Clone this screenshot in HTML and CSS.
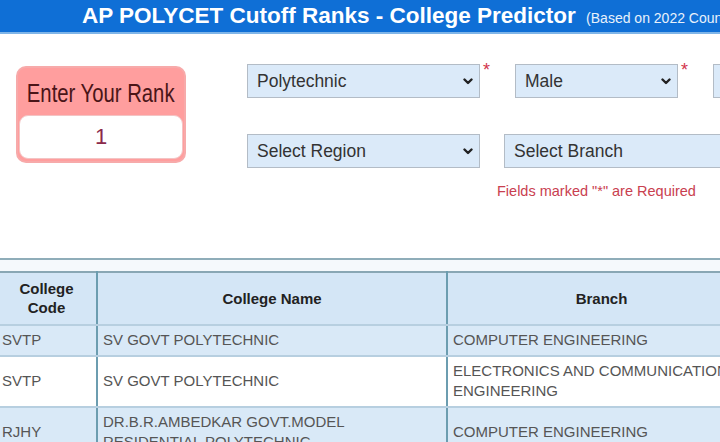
FILE: index.html
```html
<!DOCTYPE html>
<html lang="en">
  <head>
    <meta charset="UTF-8" />
    <meta name="viewport" content="width=device-width, initial-scale=1.0" />
    <title>AP POLYCET Cutoff Ranks - College Predictor</title>
    <link rel="stylesheet" href="styles.css">
  </head>
  <body>
    <header class="topbar">
      <h1>
        AP POLYCET Cutoff Ranks - College Predictor
        <small>(Based on 2022 Counselling)</small>
      </h1>
    </header>

    <main class="page">
      <section class="search">
        <div class="rank-box">
          <div class="rank-title"><span>Enter Your Rank</span></div>
          <input class="rank-input" type="text" value="1" />
        </div>

        <div class="filters">
          <div class="filter-row">
            <div class="field">
              <select class="select wide">
                <option>Polytechnic</option>
              </select>
              <span class="req">*</span>
            </div>
            <div class="field">
              <select class="select narrow">
                <option>Male</option>
                <option>Female</option>
              </select>
              <span class="req">*</span>
            </div>
            <div class="field">
              <select class="select narrow">
                <option>OC</option>
              </select>
              <span class="req">*</span>
            </div>
          </div>

          <div class="filter-row">
            <select class="select wide">
              <option>Select Region</option>
            </select>
            <select class="select wide">
              <option>Select Branch</option>
            </select>
          </div>

          <p class="note">Fields marked "*" are Required</p>
        </div>
      </section>

      <section class="results">
        <table class="result-table">
          <colgroup>
            <col class="col-code" />
            <col class="col-name" />
            <col class="col-branch" />
          </colgroup>
          <thead>
            <tr>
              <th>College Code</th>
              <th>College Name</th>
              <th>Branch</th>
            </tr>
          </thead>
          <tbody>
            <tr>
              <td>SVTP</td>
              <td>SV GOVT POLYTECHNIC</td>
              <td>COMPUTER ENGINEERING</td>
            </tr>
            <tr>
              <td>SVTP</td>
              <td>SV GOVT POLYTECHNIC</td>
              <td>ELECTRONICS AND COMMUNICATION ENGINEERING</td>
            </tr>
            <tr>
              <td>RJHY</td>
              <td>DR.B.R.AMBEDKAR GOVT.MODEL RESIDENTIAL POLYTECHNIC</td>
              <td>COMPUTER ENGINEERING</td>
            </tr>
          </tbody>
        </table>
      </section>
    </main>
  </body>
</html>
```

FILE: styles.css
```css
* {
  margin: 0;
  padding: 0;
  box-sizing: border-box;
}

body {
  font-family: "Liberation Sans", Arial, sans-serif;
  background: #ffffff;
  color: #333;
  overflow: hidden;
}

/* Top title bar */
.topbar {
  height: 34px;
  background: #0f6fd6;
  border-bottom: 2px solid #7fb5e8;
  white-space: nowrap;
}

.topbar h1 {
  padding-left: 82px;
  font-size: 22.5px;
  line-height: 31px;
  font-weight: 700;
  color: #fff;
}

.topbar small {
  margin-left: 4px;
  font-size: 14px;
  font-weight: 400;
  color: #e8f1fb;
}

/* Search form */
.search {
  display: flex;
  align-items: flex-start;
  gap: 61px;
  padding: 30px 0 0 16px;
}

.rank-box {
  flex: none;
  width: 170px;
  margin-top: 2px;
  padding: 0 1px 2px;
  background: #ff9e9e;
  border: 2px solid #f7aaaa;
  border-radius: 10px;
}

.rank-title {
  display: flex;
  justify-content: center;
  height: 47px;
  line-height: 50px;
  white-space: nowrap;
  font-size: 26px;
  color: #4a1518;
}

/* the original heading uses a narrow face */
.rank-title span {
  flex: none;
  transform: scaleX(0.78);
}

.rank-input {
  display: block;
  width: 100%;
  height: 44px;
  border: 1px solid #f3c4c4;
  border-radius: 9px;
  background: #fff;
  text-align: center;
  font-family: "Liberation Sans", sans-serif;
  font-size: 22px;
  color: #8b2a4b;
  outline: none;
}

.filters {
  flex: none;
  width: 720px;
}

.filter-row {
  display: flex;
  gap: 24px;
  margin-bottom: 36px;
}

.field {
  display: flex;
  align-items: flex-start;
}

.select {
  flex: none;
  height: 34px;
  padding: 0 24px 0 9px;
  font-family: "Liberation Sans", sans-serif;
  font-size: 17.5px;
  color: #333;
  background-color: #dbeaf9;
  background-image: url("data:image/svg+xml,%3Csvg xmlns='http://www.w3.org/2000/svg' width='10' height='7' viewBox='0 0 10 7'%3E%3Cpath d='M1.5 1.5 5 5 8.5 1.5' fill='none' stroke='%23222' stroke-width='2.4' stroke-linecap='round' stroke-linejoin='round'/%3E%3C/svg%3E");
  background-repeat: no-repeat;
  background-position: right 6px center;
  border: 1.5px solid #b3bcc6;
  border-radius: 0;
  -webkit-appearance: none;
  appearance: none;
}

.select.wide {
  width: 233px;
}

.select.narrow {
  width: 163px;
}

.req {
  width: 11px;
  padding-left: 3px;
  margin-top: -4px;
  font-size: 18px;
  line-height: 20px;
  color: #d2344c;
}

.note {
  margin: -21px 0 0 250px;
  font-size: 14.5px;
  color: #c9404f;
}

/* Results table */
.results {
  margin-top: 59px;
  padding-top: 11px;
  border-top: 2px solid #8fadb9;
  background: #f5f9fc;
}

.result-table {
  width: 760px;
  margin-left: -5px;
  table-layout: fixed;
  border-collapse: collapse;
  border-top: 2px solid #89a7b4;
  font-size: 15px;
  line-height: 20px;
}

.col-code {
  width: 101px;
}

.col-name {
  width: 350px;
}

.col-branch {
  width: 309px;
}

.result-table th,
.result-table td {
  padding: 4px 6px 5px 5px;
  border-left: 2px solid #6c9db0;
  border-right: 2px solid #6c9db0;
  border-bottom: 2px solid #b7cfe0;
  text-align: left;
  vertical-align: middle;
}

.result-table th {
  padding: 6px 14px 7px;
  background: #d4e6f6;
  font-weight: 700;
  line-height: 19px;
  color: #222;
  text-align: center;
}

.result-table td {
  color: #555;
}

.result-table tbody tr:nth-child(odd) td {
  background: #d9e9f7;
}

.result-table tbody tr:nth-child(even) td {
  background: #fff;
}
```
